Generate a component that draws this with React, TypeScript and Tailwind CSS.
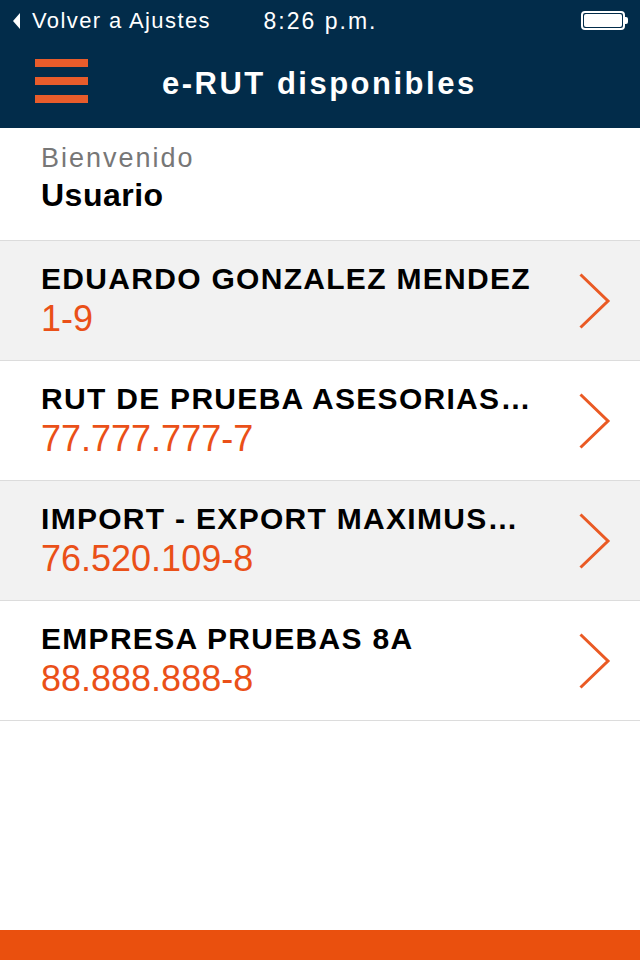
const empresas = [
  { nombre: "EDUARDO GONZALEZ MENDEZ", rut: "1-9" },
  { nombre: "RUT DE PRUEBA ASESORIAS…", rut: "77.777.777-7" },
  { nombre: "IMPORT - EXPORT MAXIMUS…", rut: "76.520.109-8" },
  { nombre: "EMPRESA PRUEBAS 8A", rut: "88.888.888-8" },
];

const font = { fontFamily: '"Liberation Sans", Arial, Helvetica, sans-serif' };

const Chevron = () => (
  <svg width="32" height="56" viewBox="0 0 32 56" fill="none">
    <path d="M1.5 1.5 L29 28 L1.5 54.5" stroke="#ea5a24" strokeWidth="3" />
  </svg>
);

const StatusBar = () => (
  <div className="flex h-[40px] items-center pt-[1px] text-[22px] leading-[40px] text-white">
    <div className="flex flex-1 items-center pl-[13px]">
      <svg width="7" height="16" viewBox="0 0 7 16" className="mr-[12px]">
        <path d="M7 0 L0 8 L7 16 Z" fill="#ffffff" />
      </svg>
      <span className="tracking-[1.4px]">Volver a Ajustes</span>
    </div>
    <div className="text-[23px] tracking-[2px]">8:26 p.m.</div>
    <div className="flex flex-1 items-center justify-end pr-[12px]">
      <div className="flex h-[19px] w-[44px] items-center justify-center rounded-[4px] border-2 border-white p-[1px]">
        <div className="h-full w-full rounded-[2px] bg-white" />
      </div>
      <div className="h-[7px] w-[3px] rounded-r-[2px] bg-white" />
    </div>
  </div>
);

const NavBar = () => (
  <div className="flex h-[88px] items-start pl-[35px]">
    <div className="mt-[19px] flex w-[53px] flex-col gap-[10px]">
      <div className="h-[8px] bg-[#e85c2b]" />
      <div className="h-[8px] bg-[#e85c2b]" />
      <div className="h-[8px] bg-[#e85c2b]" />
    </div>
    <h1 className="ml-[74px] mt-[26px] text-[31px] font-bold leading-[36px] tracking-[2.5px] text-white">
      e-RUT disponibles
    </h1>
  </div>
);

export default function App() {
  return (
    <div className="flex min-h-[960px] flex-col bg-white" style={font}>
      <header className="bg-[#022c4a]">
        <StatusBar />
        <NavBar />
      </header>

      <main className="flex-1">
        <div className="h-[113px] border-b border-[#dcdcdc] pl-[41px] pt-[15px]">
          <div className="text-[27px] leading-[30px] tracking-[2px] text-[#777777]">Bienvenido</div>
          <div className="mt-[4px] text-[32px] font-bold leading-[36px] tracking-[0.5px] text-black">
            Usuario
          </div>
        </div>

        {empresas.map((e, i) => (
          <div
            key={e.rut}
            className={`flex h-[120px] items-center border-b border-[#dcdcdc] pl-[41px] pr-[29px] ${
              i % 2 === 0 ? "bg-[#f2f2f2]" : "bg-white"
            }`}
          >
            <div className="min-w-0 flex-1 self-start pt-[22px]">
              <div className="truncate text-[30px] font-bold leading-[32px] tracking-[1.3px] text-black">
                {e.nombre}
              </div>
              <div className="mt-[4px] text-[36px] leading-[40px] text-[#ea5018]">{e.rut}</div>
            </div>
            <Chevron />
          </div>
        ))}
      </main>

      <footer className="h-[30px] bg-[#ea500e]" />
    </div>
  );
}
